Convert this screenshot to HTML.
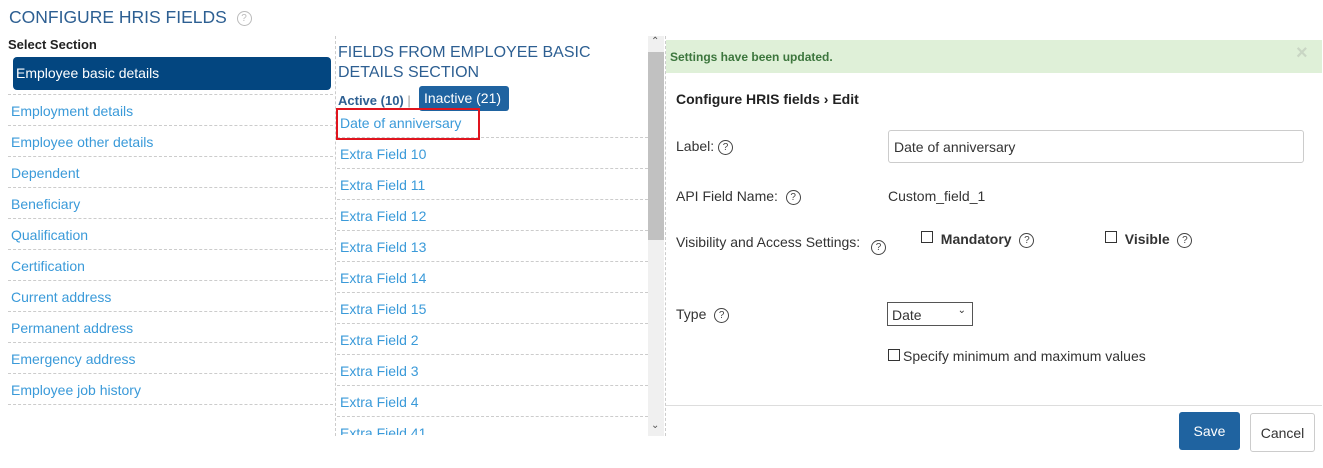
<!DOCTYPE html>
<html><head><style>
*{box-sizing:border-box;margin:0;padding:0}
body{width:1323px;height:468px;background:#fff;font-family:"Liberation Sans",sans-serif;position:relative;overflow:hidden;color:#333}
.a{position:absolute}
.q{display:inline-block;width:15px;height:15px;border:1px solid #444;border-radius:50%;font-size:10px;text-align:center;line-height:13px;color:#444;vertical-align:middle}
.row{position:absolute;left:8px;width:325px;height:31px;border-bottom:1px dashed #ccc;color:#3a9ad9;font-size:14px;padding:8px 0 0 3px}
.it{position:absolute;left:337px;width:311px;height:31px;border-bottom:1px dashed #ccc;color:#3a9ad9;font-size:14px;padding:8px 0 0 3px}
.lbl{position:absolute;font-size:14px;color:#333}
.cb{display:inline-block;width:12px;height:12px;border:1px solid #333;vertical-align:top}
</style></head><body>
<div class="a" style="left:9px;top:7px;font-size:17.5px;color:#2d5f92">CONFIGURE HRIS FIELDS &nbsp;<span class="q" style="border-color:#bbb;color:#bbb;font-size:10px">?</span></div>
<div class="a" style="left:8px;top:37px;font-size:13px;font-weight:bold;color:#222">Select Section</div>
<div class="a" style="left:13px;top:57px;width:318px;height:33px;background:#034680;border-radius:4px;color:#fff;font-size:14px;padding:8px 0 0 3px">Employee basic details</div>
<div class="a" style="left:8px;top:94px;width:325px;border-top:1px dashed #ccc"></div>
<div class="row" style="top:95px">Employment details</div>
<div class="row" style="top:126px">Employee other details</div>
<div class="row" style="top:157px">Dependent</div>
<div class="row" style="top:188px">Beneficiary</div>
<div class="row" style="top:219px">Qualification</div>
<div class="row" style="top:250px">Certification</div>
<div class="row" style="top:281px">Current address</div>
<div class="row" style="top:312px">Permanent address</div>
<div class="row" style="top:343px">Emergency address</div>
<div class="row" style="top:374px">Employee job history</div>
<div class="a" style="left:335px;top:36px;height:400px;border-left:1px dashed #ccc"></div>
<div class="a" style="left:336px;top:36px;width:330px;height:400px;overflow:hidden">
<div class="a" style="left:2px;top:7px;font-size:16px;color:#2d5f92;line-height:20px">FIELDS FROM EMPLOYEE BASIC<br>DETAILS SECTION</div>
<div class="a" style="left:2px;top:57px;font-size:13px;color:#2d5f92"><b>Active (10)</b> <span style="color:#999">|</span></div>
<div class="a" style="left:83px;top:50px;width:90px;height:25px;background:#1f63a0;border-radius:3px;color:#fff;font-size:14px;padding:4px 0 0 5px">Inactive (21)</div>
</div>
<div class="it" style="top:107px">Date of anniversary</div>
<div class="a" style="left:336px;top:108px;width:144px;height:32px;border:2px solid #e0141e"></div>
<div class="it" style="top:138px">Extra Field 10</div>
<div class="it" style="top:169px">Extra Field 11</div>
<div class="it" style="top:200px">Extra Field 12</div>
<div class="it" style="top:231px">Extra Field 13</div>
<div class="it" style="top:262px">Extra Field 14</div>
<div class="it" style="top:293px">Extra Field 15</div>
<div class="it" style="top:324px">Extra Field 2</div>
<div class="it" style="top:355px">Extra Field 3</div>
<div class="it" style="top:386px">Extra Field 4</div>
<div class="a" style="left:337px;top:417px;width:311px;height:18px;overflow:hidden;color:#3a9ad9;font-size:14px;padding:8px 0 0 3px">Extra Field 41</div>
<div class="a" style="left:648px;top:36px;width:16px;height:400px;background:#f0f0f0"></div>
<div class="a" style="left:648px;top:52px;width:16px;height:188px;background:#c1c1c1"></div>
<div class="a" style="left:651px;top:36px;font-size:10px;color:#555">&#8963;</div>
<div class="a" style="left:651px;top:420px;font-size:10px;color:#555">&#8964;</div>
<div class="a" style="left:665px;top:36px;height:400px;border-left:1px dashed #ccc"></div>
<div class="a" style="left:666px;top:40px;width:656px;height:33px;background:#dff0d8"></div>
<div class="a" style="left:670px;top:50px;font-size:12px;font-weight:bold;color:#3c763d">Settings have been updated.</div>
<div class="a" style="left:1296px;top:42px;font-size:20px;color:#c9d6c4;font-weight:bold">×</div>
<div class="a" style="left:676px;top:91px;font-size:14px;font-weight:bold;color:#222">Configure HRIS fields › Edit</div>
<div class="lbl" style="left:676px;top:138px">Label: <span class="q">?</span></div>
<div class="a" style="left:888px;top:130px;width:416px;height:33px;border:1px solid #ccc;border-radius:3px;font-size:14px;padding:8px 0 0 5px;color:#333">Date of anniversary</div>
<div class="lbl" style="left:676px;top:188px">API Field Name: &nbsp;<span class="q">?</span></div>
<div class="lbl" style="left:888px;top:188px">Custom_field_1</div>
<div class="lbl" style="left:676px;top:234px">Visibility and Access Settings:</div>
<div class="a" style="left:871px;top:239px"><span class="q">?</span></div>
<div class="lbl" style="left:921px;top:231px"><span class="cb"></span>&nbsp;&nbsp;<b>Mandatory</b> &nbsp;<span class="q">?</span></div>
<div class="lbl" style="left:1105px;top:231px"><span class="cb"></span>&nbsp;&nbsp;<b>Visible</b> &nbsp;<span class="q">?</span></div>
<div class="lbl" style="left:676px;top:306px">Type &nbsp;<span class="q">?</span></div>
<div class="a" style="left:887px;top:302px;width:86px;height:24px;border:1px solid #555;font-size:14px;padding:4px 0 0 4px">Date<span style="position:absolute;right:6px;top:2px;font-size:10px">&#8964;</span></div>
<div class="lbl" style="left:888px;top:348px"><span class="cb" style="margin-top:1px;margin-right:3px"></span>Specify minimum and maximum values</div>
<div class="a" style="left:666px;top:405px;width:656px;border-top:1px solid #ddd"></div>
<div class="a" style="left:1179px;top:412px;width:61px;height:38px;background:#1f63a0;border-radius:3px;color:#fff;font-size:14px;text-align:center;line-height:38px">Save</div>
<div class="a" style="left:1250px;top:413px;width:65px;height:39px;border:1px solid #ccc;border-radius:3px;color:#333;font-size:14px;text-align:center;line-height:39px">Cancel</div>
</body></html>
